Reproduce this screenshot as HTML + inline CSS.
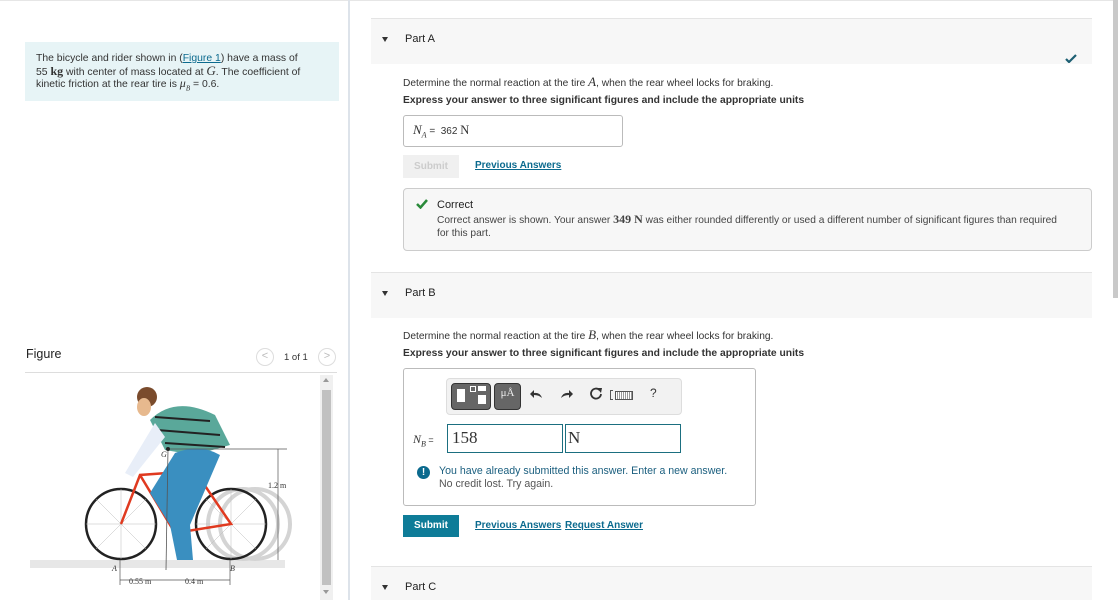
<!DOCTYPE html>
<html><head><meta charset="utf-8"><style>
*{margin:0;padding:0;box-sizing:border-box}
html,body{width:1118px;height:600px;overflow:hidden}
body{background:#fff;font-family:"Liberation Sans",Arial,sans-serif;color:#333;position:relative}
.a{position:absolute;white-space:nowrap}
.s{font-size:10.2px}
.m{font-family:"Liberation Serif",serif}
.lnk{color:#0b6a8e;text-decoration:underline;font-size:10px;font-weight:bold}
.ex{font-size:10.3px;font-weight:bold;color:#333}
.hdr{position:absolute;left:371px;width:721px;height:46px;background:#f7f7f7;border-top:1px solid #e4e4e4}
.hdr .t{position:absolute;left:34px;top:14px;font-size:11px;color:#222}
.hdr .tri{position:absolute;left:11px;top:18px;width:0;height:0;border-left:3.5px solid transparent;border-right:3.5px solid transparent;border-top:5px solid #333}
</style></head><body>
<div class="a" style="left:0;top:0;width:1118px;height:1px;background:#e6e6e6"></div>
<div class="a" style="left:348px;top:0;width:2px;height:600px;background:#dde3ea"></div>
<div class="a" style="left:1113px;top:0;width:5px;height:298px;background:#c9c9c9"></div>

<div class="a" style="left:25px;top:42px;width:314px;height:59px;background:#e7f4f6"></div>
<div class="a" style="left:36px;top:53px;font-size:10.4px;line-height:11.5px;color:#333">The bicycle and rider shown in (<span style="color:#0b6a8e;text-decoration:underline">Figure 1</span>) have a mass of<br>55 <b class="m" style="font-size:12px">kg</b> with center of mass located at <i class="m" style="font-size:13px">G</i>. The coefficient of<br>kinetic friction at the rear tire is <i class="m" style="font-size:12px">μ<sub style="font-size:7px">B</sub></i> = 0.6.</div>

<div class="a" style="left:26px;top:347px;font-size:12.5px;color:#222">Figure</div>
<div class="a" style="left:256px;top:348px;width:18px;height:18px;border:1px solid #ddd;border-radius:50%;color:#bbb;font-size:11px;text-align:center;line-height:15px">&lt;</div>
<div class="a" style="left:284px;top:352px;font-size:9.5px">1 of 1</div>
<div class="a" style="left:318px;top:348px;width:18px;height:18px;border:1px solid #ddd;border-radius:50%;color:#bbb;font-size:11px;text-align:center;line-height:15px">&gt;</div>
<div class="a" style="left:25px;top:372px;width:312px;height:1px;background:#ddd"></div>
<div class="a" style="left:320px;top:375px;width:13px;height:225px;background:#f0f0f0"></div>
<div class="a" style="left:322px;top:390px;width:9px;height:195px;background:#c1c1c1"></div>
<div class="a" style="left:323px;top:378px;width:0;height:0;border-left:3px solid transparent;border-right:3px solid transparent;border-bottom:4px solid #999"></div>
<div class="a" style="left:323px;top:590px;width:0;height:0;border-left:3px solid transparent;border-right:3px solid transparent;border-top:4px solid #999"></div>

<svg class="a" style="left:25px;top:375px" width="295" height="225">
<rect x="5" y="185" width="255" height="8" fill="#ddd" opacity=".7"/>
<g fill="none" stroke="#d4d4d4" stroke-width="4"><circle cx="230" cy="149" r="35"/><circle cx="218" cy="149" r="35"/></g>
<g fill="none" stroke="#222" stroke-width="2.5"><circle cx="96" cy="149" r="35"/><circle cx="206" cy="149" r="35"/></g>
<g stroke="#bbb" stroke-width=".5"><line x1="61" y1="149" x2="131" y2="149"/><line x1="96" y1="114" x2="96" y2="184"/><line x1="71" y1="124" x2="121" y2="174"/><line x1="71" y1="174" x2="121" y2="124"/><line x1="171" y1="149" x2="241" y2="149"/><line x1="206" y1="114" x2="206" y2="184"/><line x1="181" y1="124" x2="231" y2="174"/><line x1="181" y1="174" x2="231" y2="124"/></g>
<g stroke="#e03a20" stroke-width="2.5" fill="none"><path d="M96 149 L115 100 L170 96 L206 149 L150 158 L115 100"/><path d="M170 96 L150 158"/></g>
<path d="M125 45 Q150 20 190 40 L205 70 L170 80 L140 75 Z" fill="#5aa89a"/>
<g stroke="#222" stroke-width="2"><line x1="130" y1="42" x2="185" y2="46"/><line x1="132" y1="55" x2="195" y2="60"/><line x1="140" y1="68" x2="200" y2="72"/></g>
<circle cx="122" cy="22" r="10" fill="#7a4b2c"/><ellipse cx="119" cy="32" rx="7" ry="9" fill="#e7b98e"/>
<path d="M130 48 L100 98 L108 102 L140 62Z" fill="#e8eef8"/>
<path d="M150 78 Q175 68 195 80 L165 150 L168 185 L152 185 L145 150 L125 118 Z" fill="#3a8fc0"/>
<path d="M143 74 L141 195" stroke="#555" stroke-width=".8"/>
<path d="M143 74 L262 74 M253 74 L253 185 M95 185 L95 210 M205 185 L205 210 M95 205 L205 205" stroke="#555" stroke-width=".7" fill="none"/>
<circle cx="143" cy="74" r="2" fill="#222"/>
<g font-family="Liberation Serif,serif" font-size="8" fill="#333"><text x="136" y="82" font-style="italic">G</text><text x="243" y="113">1.2 m</text><text x="87" y="196" font-style="italic">A</text><text x="205" y="196" font-style="italic">B</text><text x="104" y="209">0.55 m</text><text x="160" y="209">0.4 m</text></g>
</svg>

<div class="hdr" style="top:18px"><div class="tri"></div><div class="t">Part A</div>
<svg class="a" style="left:694px;top:35px" width="12" height="9"><path d="M1 5 L4 8 L11 1" stroke="#1d5f73" stroke-width="2.2" fill="none"/></svg></div>
<div class="a s" style="left:403px;top:74px">Determine the normal reaction at the tire <i class="m" style="font-size:13px">A</i>, when the rear wheel locks for braking.</div>
<div class="a ex" style="left:403px;top:95px">Express your answer to three significant figures and include the appropriate units</div>
<div class="a" style="left:403px;top:115px;width:220px;height:32px;border:1px solid #bbb;border-radius:3px"></div>
<div class="a" style="left:413px;top:122px;font-size:10px"><i class="m" style="font-size:13px">N<sub style="font-size:8px">A</sub></i> = &nbsp;362 <span class="m" style="font-size:12.5px">N</span></div>
<div class="a" style="left:403px;top:155px;width:56px;height:23px;background:#f0f0f0;color:#ccc;font-size:10px;font-weight:bold;text-align:center;line-height:23px">Submit</div>
<div class="a lnk" style="left:475px;top:160px">Previous Answers</div>
<div class="a" style="left:403px;top:188px;width:689px;height:63px;border:1px solid #ccc;border-radius:4px;background:#f7f7f7"></div>
<svg class="a" style="left:416px;top:199px" width="12" height="10"><path d="M1 5 L4.5 8.5 L11 1" stroke="#2a8a3a" stroke-width="2.5" fill="none"/></svg>
<div class="a" style="left:437px;top:199px;font-size:11px;color:#222">Correct</div>
<div class="a" style="left:437px;top:213px;font-size:10.2px;line-height:12.5px;color:#444">Correct answer is shown. Your answer <b class="m" style="font-size:12px">349 N</b> was either rounded differently or used a different number of significant figures than required<br>for this part.</div>

<div class="hdr" style="top:272px"><div class="tri"></div><div class="t">Part B</div></div>
<div class="a s" style="left:403px;top:327px">Determine the normal reaction at the tire <i class="m" style="font-size:13px">B</i>, when the rear wheel locks for braking.</div>
<div class="a ex" style="left:403px;top:348px">Express your answer to three significant figures and include the appropriate units</div>
<div class="a" style="left:403px;top:368px;width:353px;height:138px;border:1px solid #bbb;border-radius:3px"></div>
<div class="a" style="left:446px;top:378px;width:236px;height:37px;background:#f2f2f2;border:1px solid #ddd;border-radius:4px"></div>
<div class="a" style="left:451px;top:383px;width:40px;height:27px;background:#666;border-radius:4px;border:1px solid #333"></div>
<div class="a" style="left:457px;top:389px;width:8px;height:13px;background:#fff"></div>
<div class="a" style="left:470px;top:386px;width:6px;height:6px;border:1px solid #fff"></div>
<div class="a" style="left:478px;top:386px;width:8px;height:5px;background:#fff"></div>
<div class="a" style="left:478px;top:395px;width:8px;height:9px;background:#fff"></div>
<div class="a" style="left:494px;top:383px;width:27px;height:27px;background:#666;border-radius:4px;border:1px solid #333;color:#eee;font-family:'Liberation Serif',serif;font-size:11px;text-align:center;line-height:18px">μÅ</div>
<svg class="a" style="left:530px;top:388px" width="14" height="12"><path d="M12 10 Q10 4 4 5 L4 2 L0 6 L4 10 L4 7 Q9 7 12 10Z" fill="#333"/></svg>
<svg class="a" style="left:559px;top:388px" width="14" height="12"><path d="M2 10 Q4 4 10 5 L10 2 L14 6 L10 10 L10 7 Q5 7 2 10Z" fill="#333"/></svg>
<svg class="a" style="left:589px;top:386px" width="14" height="14"><path d="M10.5 4 A5 5 0 1 0 12 8" stroke="#333" stroke-width="1.8" fill="none"/><path d="M8 2 L13 2 L12 7Z" fill="#333"/></svg>
<div class="a" style="left:610px;top:390px;width:3px;height:10px;border:1px solid #555;border-right:none"></div>
<div class="a" style="left:615px;top:391px;width:18px;height:9px;border:1px solid #555;background:repeating-linear-gradient(90deg,#fff 0 1px,#999 1px 2px)"></div>
<div class="a" style="left:650px;top:386px;font-size:12px;color:#333">?</div>
<div class="a" style="left:413px;top:432px;font-size:9px"><i class="m" style="font-size:12px">N<sub style="font-size:8px">B</sub></i> =</div>
<div class="a m" style="left:447px;top:424px;width:116px;height:29px;border:1px solid #1b6f80;font-size:17px;padding:3px 4px;color:#333">158</div>
<div class="a m" style="left:565px;top:424px;width:116px;height:29px;border:1px solid #1b6f80;font-size:17px;padding:3px 2px;color:#333">N</div>
<div class="a" style="left:417px;top:466px;width:13px;height:13px;border-radius:50%;background:#0b6a8e;color:#fff;font-size:10px;font-weight:bold;text-align:center;line-height:13px">!</div>
<div class="a" style="left:439px;top:465px;font-size:10.6px;line-height:13px;color:#1b5f7f">You have already submitted this answer. Enter a new answer.<br><span style="color:#555">No credit lost. Try again.</span></div>
<div class="a" style="left:403px;top:515px;width:56px;height:22px;background:#0e7c98;color:#fff;font-size:10px;font-weight:bold;text-align:center;line-height:22px">Submit</div>
<div class="a lnk" style="left:475px;top:520px">Previous Answers</div>
<div class="a lnk" style="left:565px;top:520px">Request Answer</div>

<div class="hdr" style="top:566px;height:34px"><div class="tri"></div><div class="t">Part C</div></div>
</body></html>
